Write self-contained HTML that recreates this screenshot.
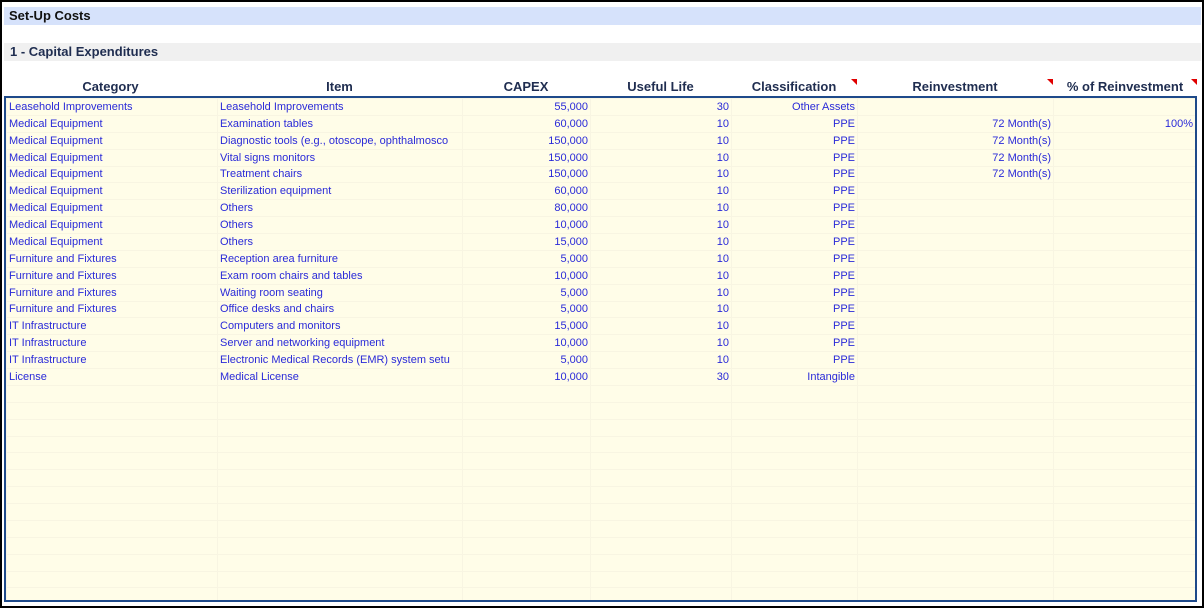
<!DOCTYPE html>
<html><head><style>
body{margin:0;width:1204px;height:608px;overflow:hidden;background:#fff;font-family:"Liberation Sans",Arial,sans-serif;position:relative}
.frame{position:absolute;left:0;top:0;width:1200px;height:604px;border:2px solid #000}
.bar1{position:absolute;left:4px;top:7px;width:1197px;height:18px;background:#d6e2fb;font-weight:bold;font-size:13px;color:#111;line-height:18px;padding-left:5px;box-sizing:border-box}
.bar2{position:absolute;left:4px;top:43px;width:1197px;height:18px;background:#f0f0f0;font-weight:bold;font-size:13px;color:#1f2d50;line-height:18px;padding-left:6px;box-sizing:border-box}
.h{position:absolute;top:79px;font-weight:bold;font-size:13px;color:#1f2d50;text-align:center}
.tri{position:absolute;width:0;height:0;border-left:6px solid transparent;border-top:6px solid #e00000}
.tbl{position:absolute;left:4px;top:96px;width:1193px;height:506px;border:2px solid #1e4a8a;box-sizing:border-box;background:#fffde8;overflow:hidden}
table{border-collapse:collapse;font-size:11px;color:#2a2ad8;table-layout:fixed;width:1189px}
tr{height:16.875px}
td{padding:0 2px;border:1px solid #f8f5e2;white-space:nowrap;overflow:hidden;line-height:12px;height:14.875px}
td.r{text-align:right}
</style></head><body>
<div class="frame"></div>
<div class="bar1">Set-Up Costs</div>
<div class="bar2">1 - Capital Expenditures</div>
<div class="h" style="left:4px;width:213px">Category</div>
<div class="h" style="left:217px;width:245px">Item</div>
<div class="h" style="left:462px;width:128px">CAPEX</div>
<div class="h" style="left:590px;width:141px">Useful Life</div>
<div class="h" style="left:731px;width:126px">Classification</div>
<div class="h" style="left:857px;width:196px">Reinvestment</div>
<div class="h" style="left:1053px;width:144px">% of Reinvestment</div>
<div class="tri" style="left:851px;top:79px"></div>
<div class="tri" style="left:1047px;top:79px"></div>
<div class="tri" style="left:1191px;top:79px"></div>
<div class="tbl"><table>
<colgroup><col style="width:211px"><col style="width:245px"><col style="width:128px"><col style="width:141px"><col style="width:126px"><col style="width:196px"><col style="width:142px"></colgroup>
<tr><td>Leasehold Improvements</td><td>Leasehold Improvements</td><td class="r">55,000</td><td class="r">30</td><td class="r">Other Assets</td><td></td><td></td></tr>
<tr><td>Medical Equipment</td><td>Examination tables</td><td class="r">60,000</td><td class="r">10</td><td class="r">PPE</td><td class="r">72 Month(s)</td><td class="r">100%</td></tr>
<tr><td>Medical Equipment</td><td>Diagnostic tools (e.g., otoscope, ophthalmosco</td><td class="r">150,000</td><td class="r">10</td><td class="r">PPE</td><td class="r">72 Month(s)</td><td></td></tr>
<tr><td>Medical Equipment</td><td>Vital signs monitors</td><td class="r">150,000</td><td class="r">10</td><td class="r">PPE</td><td class="r">72 Month(s)</td><td></td></tr>
<tr><td>Medical Equipment</td><td>Treatment chairs</td><td class="r">150,000</td><td class="r">10</td><td class="r">PPE</td><td class="r">72 Month(s)</td><td></td></tr>
<tr><td>Medical Equipment</td><td>Sterilization equipment</td><td class="r">60,000</td><td class="r">10</td><td class="r">PPE</td><td></td><td></td></tr>
<tr><td>Medical Equipment</td><td>Others</td><td class="r">80,000</td><td class="r">10</td><td class="r">PPE</td><td></td><td></td></tr>
<tr><td>Medical Equipment</td><td>Others</td><td class="r">10,000</td><td class="r">10</td><td class="r">PPE</td><td></td><td></td></tr>
<tr><td>Medical Equipment</td><td>Others</td><td class="r">15,000</td><td class="r">10</td><td class="r">PPE</td><td></td><td></td></tr>
<tr><td>Furniture and Fixtures</td><td>Reception area furniture</td><td class="r">5,000</td><td class="r">10</td><td class="r">PPE</td><td></td><td></td></tr>
<tr><td>Furniture and Fixtures</td><td>Exam room chairs and tables</td><td class="r">10,000</td><td class="r">10</td><td class="r">PPE</td><td></td><td></td></tr>
<tr><td>Furniture and Fixtures</td><td>Waiting room seating</td><td class="r">5,000</td><td class="r">10</td><td class="r">PPE</td><td></td><td></td></tr>
<tr><td>Furniture and Fixtures</td><td>Office desks and chairs</td><td class="r">5,000</td><td class="r">10</td><td class="r">PPE</td><td></td><td></td></tr>
<tr><td>IT Infrastructure</td><td>Computers and monitors</td><td class="r">15,000</td><td class="r">10</td><td class="r">PPE</td><td></td><td></td></tr>
<tr><td>IT Infrastructure</td><td>Server and networking equipment</td><td class="r">10,000</td><td class="r">10</td><td class="r">PPE</td><td></td><td></td></tr>
<tr><td>IT Infrastructure</td><td>Electronic Medical Records (EMR) system setu</td><td class="r">5,000</td><td class="r">10</td><td class="r">PPE</td><td></td><td></td></tr>
<tr><td>License</td><td>Medical License</td><td class="r">10,000</td><td class="r">30</td><td class="r">Intangible</td><td></td><td></td></tr>
<tr><td></td><td></td><td></td><td></td><td></td><td></td><td></td></tr>
<tr><td></td><td></td><td></td><td></td><td></td><td></td><td></td></tr>
<tr><td></td><td></td><td></td><td></td><td></td><td></td><td></td></tr>
<tr><td></td><td></td><td></td><td></td><td></td><td></td><td></td></tr>
<tr><td></td><td></td><td></td><td></td><td></td><td></td><td></td></tr>
<tr><td></td><td></td><td></td><td></td><td></td><td></td><td></td></tr>
<tr><td></td><td></td><td></td><td></td><td></td><td></td><td></td></tr>
<tr><td></td><td></td><td></td><td></td><td></td><td></td><td></td></tr>
<tr><td></td><td></td><td></td><td></td><td></td><td></td><td></td></tr>
<tr><td></td><td></td><td></td><td></td><td></td><td></td><td></td></tr>
<tr><td></td><td></td><td></td><td></td><td></td><td></td><td></td></tr>
<tr><td></td><td></td><td></td><td></td><td></td><td></td><td></td></tr>
<tr><td></td><td></td><td></td><td></td><td></td><td></td><td></td></tr>
</table></div>
</body></html>
